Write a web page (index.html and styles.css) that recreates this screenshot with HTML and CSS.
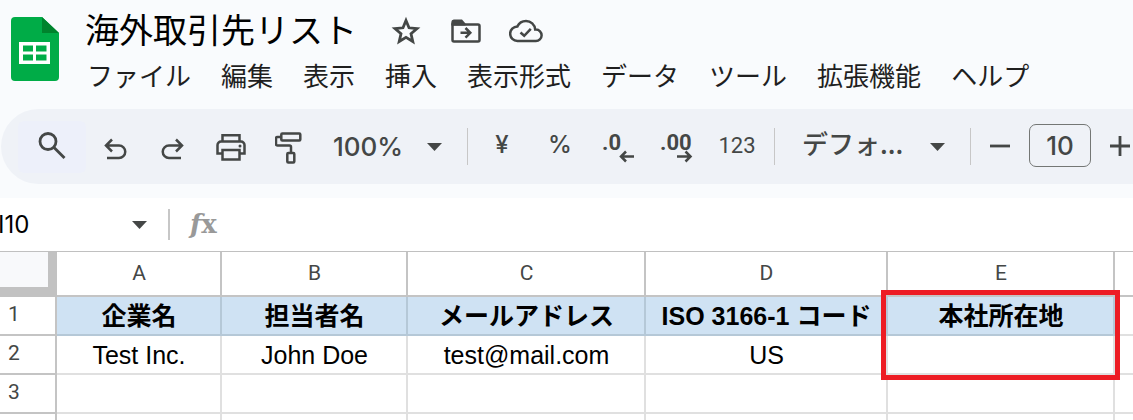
FILE: index.html
```html
<!DOCTYPE html>
<html lang="ja">
<head>
  <meta charset="UTF-8" />
  <meta name="viewport" content="width=device-width, initial-scale=1.0" />
  <title>海外取引先リスト</title>
  <link rel="stylesheet" href="styles.css">
</head>
<body>
  <header class="header">
    <a class="logo" href="#" aria-label="スプレッドシート ホーム">
      <svg width="48" height="65" viewBox="0 0 48 65">
        <path fill="#00ac47" d="M4 0h27l17 16v44a4 4 0 0 1-4 4H4a4 4 0 0 1-4-4V4a4 4 0 0 1 4-4z"/>
        <path fill="#00832d" d="M31 0l17 16H31z"/>
        <path fill="#fff" fill-rule="evenodd" d="M8 25h31v22H8zM12 28.500v6h10v-6zM25 28.500v6h10.500v-6zM12 37.500v6h10v-6zM25 37.500v6h10.500v-6z"/>
      </svg>
    </a>
    <div class="header-main">
      <div class="title-row">
        <h1 class="title">海外取引先リスト</h1>
        <button class="title-btn" aria-label="スター">
          <svg width="30" height="30" viewBox="0 0 30 30" fill="none" stroke="#444746" stroke-width="2.800">
            <path d="M15 4.500l3 7.300 8 .7-6 5.200 1.800 7.800L15 21.400l-6.800 4.100L10 17.700l-6-5.200 8-.7z"/>
          </svg>
        </button>
        <button class="title-btn" aria-label="移動">
          <svg width="30" height="26" viewBox="0 0 30 26" fill="none" stroke="#444746" stroke-width="2.500">
            <path d="M1.500 6.500h25.500a1.500 1.500 0 0 1 1.500 1.500v14a1.500 1.500 0 0 1-1.500 1.500H3A1.500 1.500 0 0 1 1.500 22z"/>
            <path fill="#444746" stroke="none" d="M3 1.500h8l3.500 4v2H.3V4A2.600 2.600 0 0 1 3 1.500z"/>
            <path d="M9.500 14.800h9M14.500 10l4.800 4.800-4.800 4.800"/>
          </svg>
        </button>
        <button class="title-btn" aria-label="ドキュメントのステータス">
          <svg width="34" height="24" viewBox="0 0 34 24" fill="none" stroke="#444746" stroke-width="2.500">
            <path d="M8.500 22h18.300a5.700 5.700 0 0 0 .2-11.400h-.8C25.800 5.500 21.800 2 17 2c-3.900 0-7 2-8.600 5.400A7.300 7.300 0 0 0 8.500 22z"/>
            <path d="M11.500 13.500l3.700 3.300 6.600-7"/>
          </svg>
        </button>
      </div>
      <nav class="menu">
        <button>ファイル</button>
        <button>編集</button>
        <button>表示</button>
        <button>挿入</button>
        <button>表示形式</button>
        <button>データ</button>
        <button>ツール</button>
        <button>拡張機能</button>
        <button>ヘルプ</button>
      </nav>
    </div>
  </header>

  <div class="toolbar">
    <button class="tool search" aria-label="メニューを検索">
      <svg width="28" height="32" viewBox="0 0 28 32" fill="none" stroke="#444746" stroke-width="2.800">
        <circle cx="10" cy="10.500" r="8"/>
        <path d="M16 16.500l10.500 10.500"/>
      </svg>
    </button>
    <button class="tool" aria-label="元に戻す">
      <svg width="24" height="32" viewBox="0 0 24 32" fill="none" stroke="#444746" stroke-width="2.500">
        <path d="M3 14.500h13a6.200 6.200 0 0 1 0 12.500H4M9 8.500l-6 6 6 6"/>
      </svg>
    </button>
    <button class="tool" aria-label="やり直し">
      <svg width="24" height="32" viewBox="0 0 24 32" fill="none" stroke="#444746" stroke-width="2.500">
        <path d="M21 14.500H8a6.200 6.200 0 0 0 0 12.500h12M15 8.500l6 6-6 6"/>
      </svg>
    </button>
    <button class="tool" aria-label="印刷">
      <svg width="30" height="32" viewBox="0 0 30 32" fill="none" stroke="#444746" stroke-width="2.500">
        <path d="M6.500 10.500V4.300h17v6.200"/>
        <path d="M6.500 22.500H1.500V14a3.500 3.500 0 0 1 3.500-3.500h20a3.500 3.500 0 0 1 3.500 3.500v8.500h-5"/>
        <path d="M6.500 19h17v9.500h-17z"/>
        <circle cx="24" cy="15" r="1.500" fill="#444746" stroke="none"/>
      </svg>
    </button>
    <button class="tool" aria-label="書式を貼り付け">
      <svg width="28" height="34" viewBox="0 0 28 34" fill="none" stroke="#444746" stroke-width="2.500">
        <rect x="6.300" y="3.500" width="19" height="7" rx="1"/>
        <path d="M6 7H2.500A1.500 1.500 0 0 0 1 8.500V14a1.500 1.500 0 0 0 1.500 1.500H14.500a1.500 1.500 0 0 1 1.500 1.500v6"/>
        <rect x="12.300" y="23" width="7" height="9.500" rx="1"/>
      </svg>
    </button>
    <label class="picker zoom">
      <select aria-label="ズーム">
        <option>100%</option>
      </select>
      <svg class="caret" width="15" height="8" viewBox="0 0 15 8"><path fill="#444746" d="M0 0h15L7.500 8z"/></svg>
    </label>
    <span class="sep"></span>
    <button class="tool symbol" aria-label="通貨の表示形式">¥</button>
    <button class="tool symbol" aria-label="パーセント表示形式">%</button>
    <button class="tool" aria-label="小数点以下の桁数を減らす">
      <svg width="36" height="34" viewBox="0 0 36 34">
        <text class="decimal" x="2" y="20">.0</text>
        <path fill="none" stroke="#444746" stroke-width="2.500" d="M34 26.500H21M26 21.500l-5 5 5 5"/>
      </svg>
    </button>
    <button class="tool" aria-label="小数点以下の桁数を増やす">
      <svg width="36" height="34" viewBox="0 0 36 34">
        <text class="decimal" x="2" y="20">.00</text>
        <path fill="none" stroke="#444746" stroke-width="2.500" d="M19 26.500h13M27.500 21.500l5 5-5 5"/>
      </svg>
    </button>
    <button class="tool number" aria-label="表示形式の詳細設定">123</button>
    <span class="sep"></span>
    <label class="picker font">
      <select aria-label="フォント">
        <option>デフォ...</option>
      </select>
      <svg class="caret" width="15" height="8" viewBox="0 0 15 8"><path fill="#444746" d="M0 0h15L7.500 8z"/></svg>
    </label>
    <span class="sep"></span>
    <div class="font-size">
      <button aria-label="フォントサイズを縮小">
        <svg width="20" height="20" viewBox="0 0 20 20"><path stroke="#444746" stroke-width="2.800" d="M0 10h20"/></svg>
      </button>
      <input type="text" value="10" aria-label="フォントサイズ">
      <button aria-label="フォントサイズを拡大">
        <svg width="20" height="20" viewBox="0 0 20 20"><path stroke="#444746" stroke-width="2.800" d="M0 10h20M10 0v20"/></svg>
      </button>
    </div>
  </div>

  <div class="formula-bar">
    <input class="name-box" type="text" value="I10" aria-label="名前ボックス">
    <button class="name-caret" aria-label="名前付き範囲">
      <svg width="15" height="8" viewBox="0 0 15 8"><path fill="#444746" d="M0 0h15L7.500 8z"/></svg>
    </button>
    <span class="fx"><i>f</i>x</span>
    <input class="formula" type="text" aria-label="数式">
  </div>

  <main class="grid">
    <table class="sheet">
      <colgroup>
        <col class="col-num">
        <col class="col-a">
        <col class="col-b">
        <col class="col-c">
        <col class="col-d">
        <col class="col-e">
        <col>
      </colgroup>
      <thead>
        <tr>
          <th class="corner"></th>
          <th>A</th>
          <th>B</th>
          <th>C</th>
          <th>D</th>
          <th>E</th>
          <th></th>
        </tr>
      </thead>
      <tbody>
        <tr>
          <th>1</th>
          <td class="head">企業名</td>
          <td class="head">担当者名</td>
          <td class="head">メールアドレス</td>
          <td class="head">ISO 3166-1 コード</td>
          <td class="head marked">本社所在地<span class="marker"></span></td>
          <td></td>
        </tr>
        <tr>
          <th>2</th>
          <td>Test Inc.</td>
          <td>John Doe</td>
          <td>test@mail.com</td>
          <td>US</td>
          <td></td>
          <td></td>
        </tr>
        <tr>
          <th>3</th>
          <td></td>
          <td></td>
          <td></td>
          <td></td>
          <td></td>
          <td></td>
        </tr>
        <tr>
          <th></th>
          <td></td>
          <td></td>
          <td></td>
          <td></td>
          <td></td>
          <td></td>
        </tr>
      </tbody>
    </table>
  </main>
</body>
</html>
```
FILE: styles.css
```css
* {
  box-sizing: border-box;
}
html, body {
  margin: 0;
  padding: 0;
  height: 100%;
  overflow: hidden;
  font-family: "Liberation Sans", "Noto Sans CJK JP", sans-serif;
  background: #f9fbfd;
  color: #1f1f1f;
}
body {
  display: flex;
  flex-direction: column;
}
button, input, select {
  margin: 0;
  padding: 0;
  border: 0;
  background: none;
  font: inherit;
  color: inherit;
}
button {
  cursor: pointer;
}
svg {
  display: block;
}

/* Header */
.header {
  display: flex;
  flex: none;
  gap: 26px;
  padding: 8px 11px 9px;
}
.logo {
  padding-top: 9px;
}
.title-row {
  display: flex;
  align-items: center;
  height: 46px;
}
.title {
  margin: 0 19px 0 0;
  padding-bottom: 4px;
  font-family: "Noto Sans CJK JP", sans-serif;
  font-size: 34px;
  font-weight: 400;
  line-height: 42px;
  color: #000;
  white-space: nowrap;
}
.title-btn {
  display: flex;
  justify-content: center;
  width: 60px;
}
.menu {
  display: flex;
  gap: 30px;
  height: 46px;
  padding: 0 0 5px 2px;
  font-family: "Noto Sans CJK JP", sans-serif;
  font-size: 26px;
  white-space: nowrap;
}

/* Toolbar */
.toolbar {
  display: flex;
  flex: none;
  align-items: center;
  height: 75px;
  margin-left: 1px;
  padding-left: 17px;
  border-radius: 38px 0 0 38px;
  background: #eff2f7;
  color: #444746;
}
.tool {
  display: flex;
  flex: none;
  align-items: center;
  justify-content: center;
  width: 58px;
  height: 52px;
}
.search {
  width: 68px;
  border-radius: 6px;
  background: #edf0fa;
}
.symbol {
  padding-bottom: 4px;
  font-family: Inter, sans-serif;
  font-size: 24px;
  font-weight: 500;
}
.decimal {
  font-family: Roboto, sans-serif;
  font-size: 22px;
  font-weight: 700;
  fill: #444746;
}
.number {
  width: 64px;
  padding-bottom: 2px;
  font-family: Roboto, sans-serif;
  font-size: 22px;
}
.sep {
  flex: none;
  width: 1px;
  height: 37px;
  margin: 0 5px;
  background: #c7c7c7;
}
.picker {
  display: grid;
  flex: none;
  align-items: center;
}
.picker select, .picker .caret {
  grid-area: 1 / 1;
}
.picker select {
  width: 100%;
  height: 52px;
  appearance: none;
}
.picker .caret {
  justify-self: end;
  margin-right: 20px;
  pointer-events: none;
}
.zoom {
  width: 144px;
}
.zoom select {
  padding-left: 15px;
  font-family: Inter, sans-serif;
  font-size: 26px;
  font-weight: 500;
}
.font {
  width: 185px;
}
.font select {
  padding: 0 0 8px 22px;
  font-family: "Noto Sans CJK JP", sans-serif;
  font-size: 26px;
  font-weight: 500;
}
.font-size {
  display: flex;
  flex: none;
  align-items: center;
  gap: 6px;
  padding: 0 0 2px 1px;
}
.font-size button {
  display: flex;
  justify-content: center;
  width: 46px;
}
.font-size input {
  width: 62px;
  height: 43px;
  border: 1px solid #747775;
  border-radius: 7px;
  font-family: Inter, sans-serif;
  font-size: 26px;
  font-weight: 500;
  text-align: center;
}

/* Formula bar */
.formula-bar {
  display: flex;
  flex: none;
  align-items: center;
  height: 54px;
  margin-top: 14px;
  border-bottom: 1px solid #c0c0c0;
  background: #fff;
}
.name-box {
  width: 126px;
  margin-left: -2px;
  font-family: Inter, sans-serif;
  font-size: 24px;
  color: #000;
}
.name-caret {
  display: flex;
  align-items: center;
  width: 46px;
  height: 31px;
  padding-left: 8px;
  border-right: 2px solid #c7c7c7;
}
.fx {
  padding-left: 20px;
  font-family: "DejaVu Serif", serif;
  font-size: 26px;
  line-height: 31px;
  font-weight: 700;
  color: #999;
}
.formula {
  flex: 1;
  min-width: 0;
}

/* Sheet */
.grid {
  flex: 1;
  min-height: 0;
  overflow: hidden;
  background: #fff;
}
.sheet {
  width: 100%;
  table-layout: fixed;
  border-collapse: separate;
  border-spacing: 0;
}
.col-num {
  width: 57px;
}
.col-a {
  width: 165px;
}
.col-b {
  width: 186px;
}
.col-c {
  width: 238px;
}
.col-d {
  width: 242px;
}
.col-e {
  width: 227px;
}
.sheet th, .sheet td {
  height: 39px;
  padding: 2px 0 0 1px;
  border-right: 2px solid #e0e0e0;
  border-bottom: 2px solid #e0e0e0;
  font-size: 25px;
  line-height: 35px;
  text-align: center;
  white-space: nowrap;
  color: #000;
}
.sheet th {
  border-color: #c4c4c4;
  font-family: Roboto, sans-serif;
  font-size: 21px;
  font-weight: 400;
  color: #444746;
}
.sheet thead th {
  height: 45px;
  padding-top: 0;
}
.sheet tbody th {
  padding: 0 0 2px 8px;
  text-align: left;
}
.sheet th:last-child, .sheet td:last-child {
  border-right: 0;
}
.sheet .corner {
  border-right: 9px solid #c2c2c2;
  border-bottom: 10px solid #c2c2c2;
  background: #f8f9fb;
}
.sheet .head {
  border-color: #b5c8d7;
  background: #cfe2f3;
  font-weight: 700;
}
.marked {
  position: relative;
}
.marker {
  position: absolute;
  top: -7px;
  right: -7px;
  bottom: -46px;
  left: -7px;
  z-index: 1;
  border: 5px solid #ed1c24;
}
```
